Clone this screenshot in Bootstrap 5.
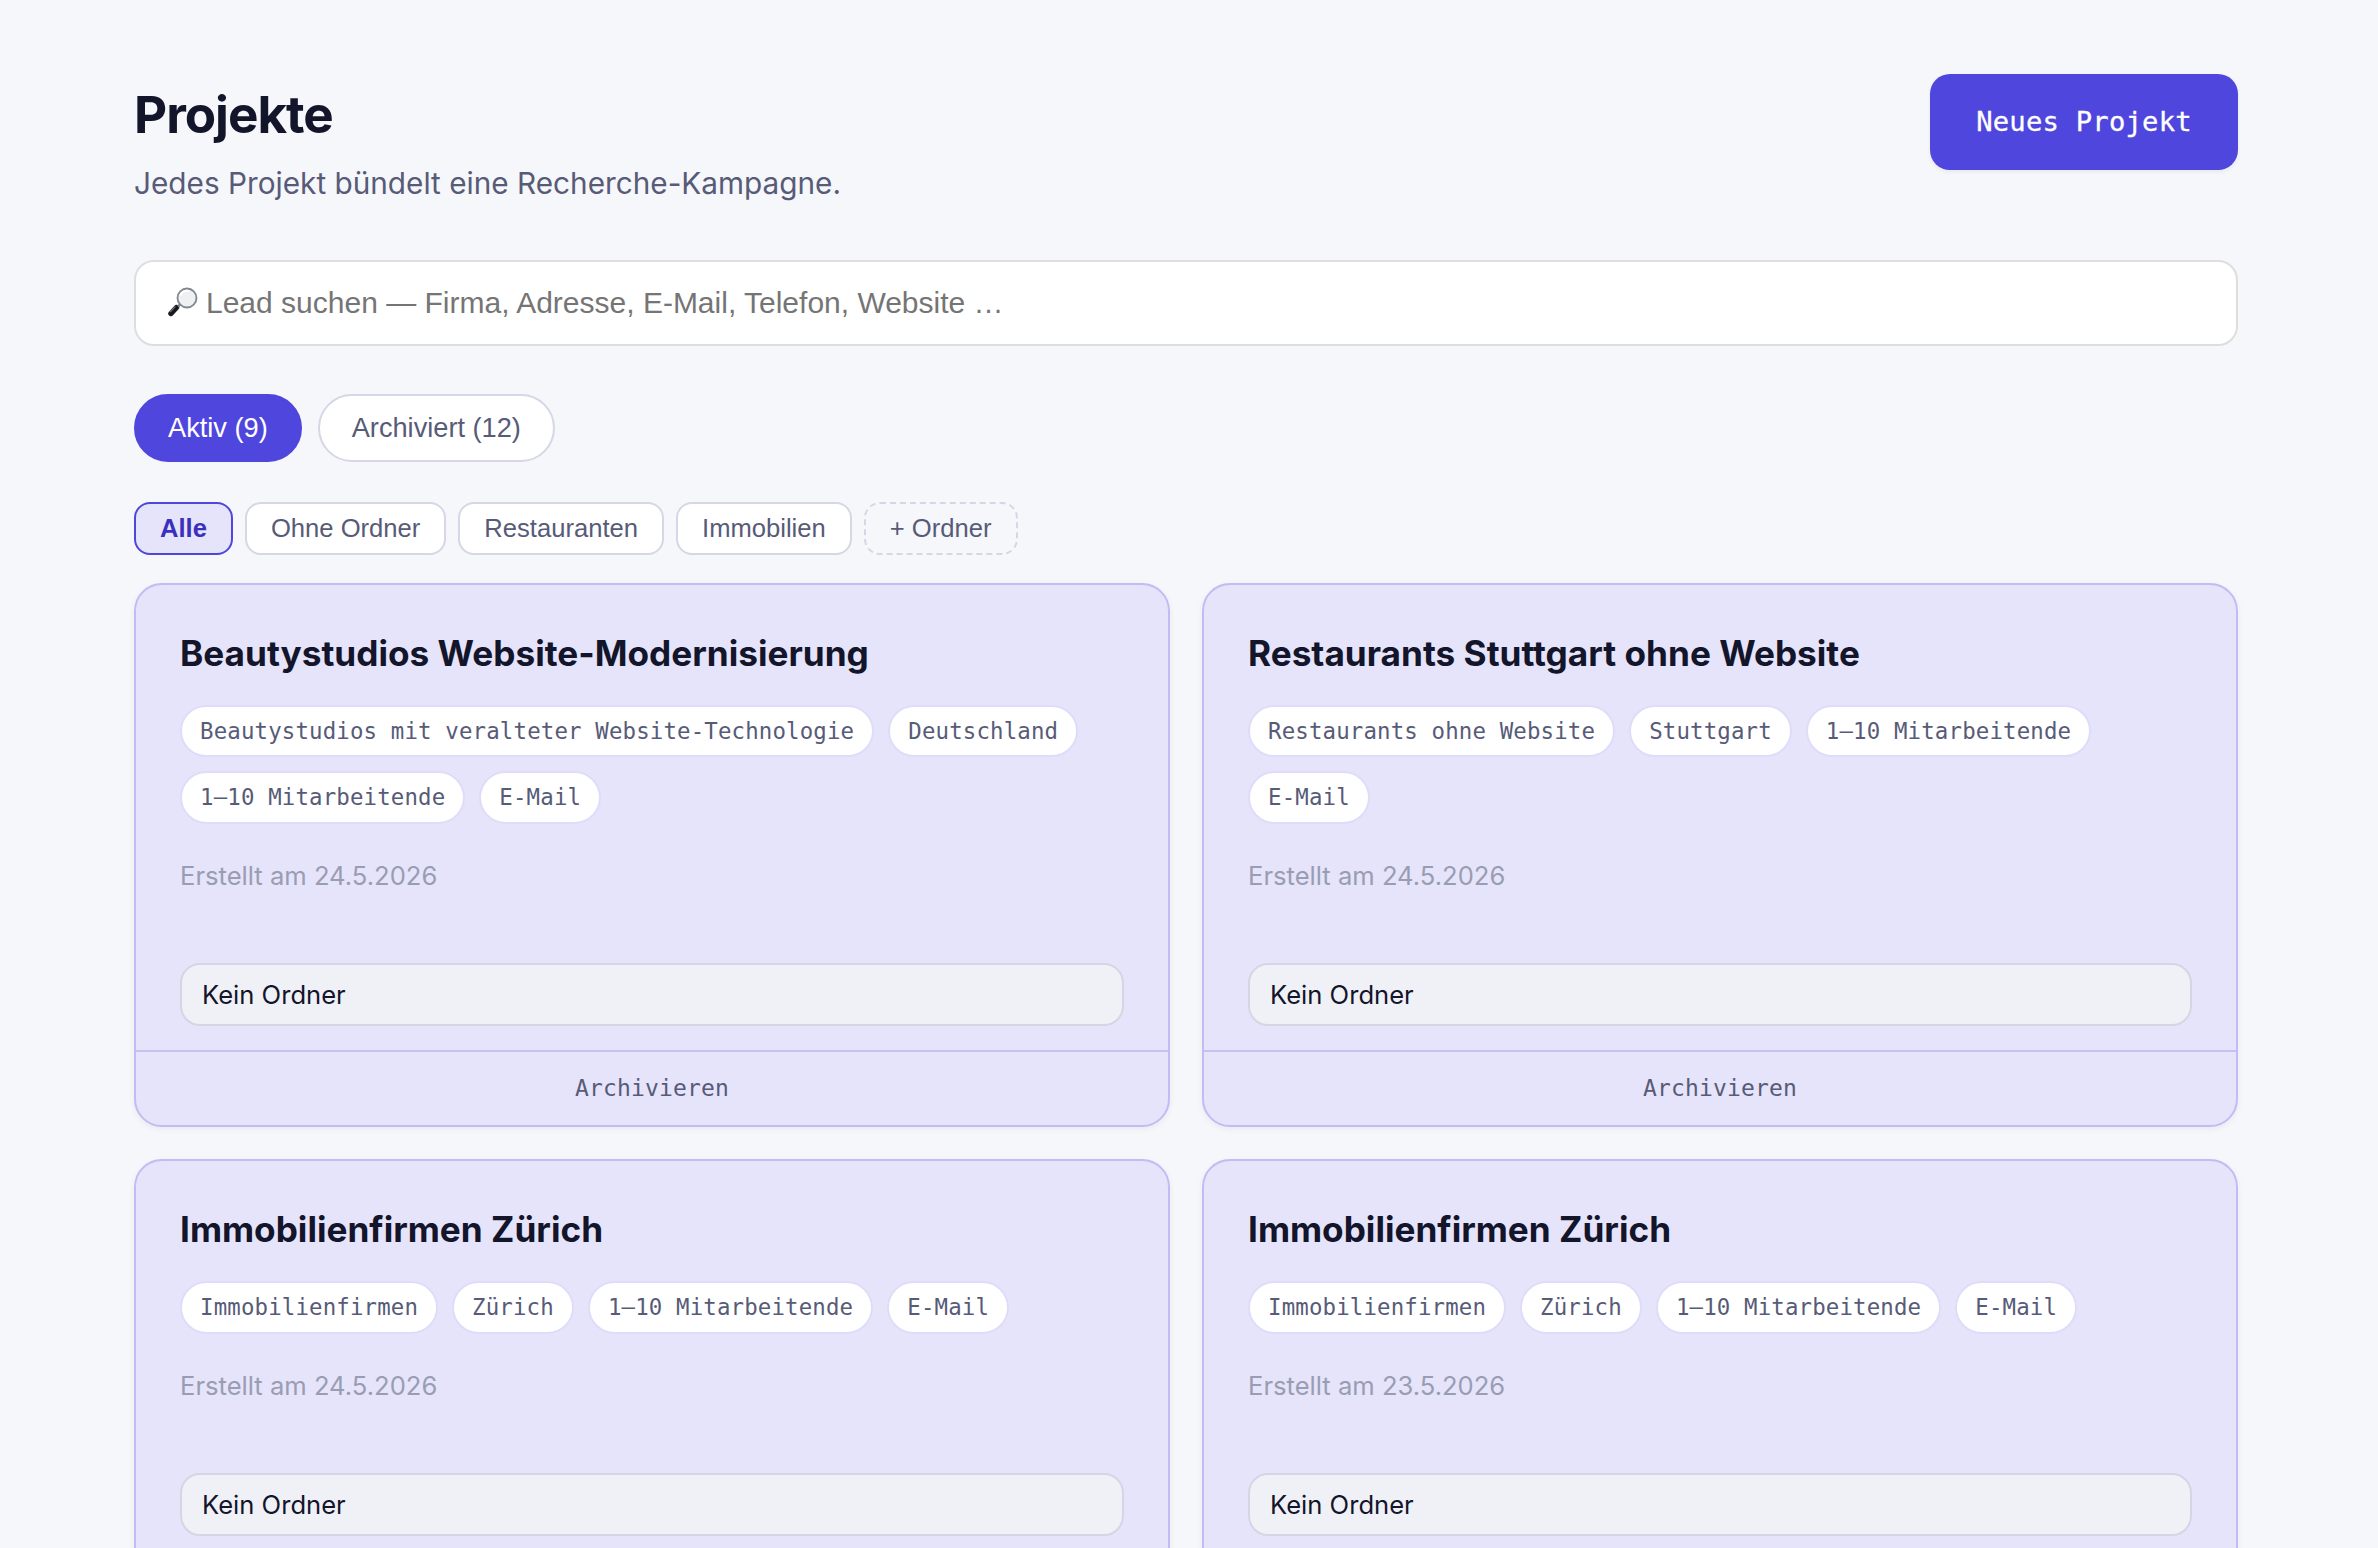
<!DOCTYPE html>
<html lang="de">

<head>
    <meta charset="UTF-8">
    <title>Projekte</title>
    <!-- Bootstrap CSS -->
    <link href="https://cdn.jsdelivr.net/npm/bootstrap@5.3.0/dist/css/bootstrap.min.css" rel="stylesheet">
    <style>
        :root {
            --ink: #13152b;
            --muted-ink: #575b78;
            --primary: #4f46dd;
            --line: #d6d6e6;
            --mono: "DejaVu Sans Mono", monospace;
            --arial: "Liberation Sans", Arial, sans-serif;
        }

        body {
            background: #f6f7fb;
            color: var(--ink);
            font-family: Inter, sans-serif;
            overflow: hidden;
        }

        .page {
            height: 1548px;
            overflow: hidden;
            padding: 74px 140px 0 134px;
        }

        .page-title {
            font-size: 51.2px;
            line-height: 60px;
            font-weight: 700;
            letter-spacing: -1.02px;
            margin: 10px 0 0;
        }

        .page-sub {
            font-size: 29.75px;
            line-height: 48px;
            color: var(--muted-ink);
            margin: 15px 0 0;
        }

        .btn-new {
            width: 308px;
            height: 96px;
            border-radius: 20px;
            background: var(--primary);
            color: #fff;
            font-family: var(--mono);
            font-size: 27.2px;
            letter-spacing: .22px;
            -webkit-text-stroke: .3px #fff;
            box-shadow: 0 2px 4px rgba(19, 21, 43, .06);
        }

        .search-box {
            height: 86px;
            margin-top: 53px;
            padding: 0 30px;
            background: #fff;
            border: 2px solid #dedede;
            border-radius: 20px;
        }

        .search-box input {
            margin-bottom: 2px;
            font-family: var(--arial);
            font-size: 30px;
            color: #757575;
        }

        .search-box input::placeholder {
            color: #757575;
            opacity: 1;
        }

        .status-tabs {
            margin-top: 48px;
            gap: 16px;
        }

        .status-tab {
            height: 68px;
            padding: 0 32px;
            border: 2px solid var(--line);
            background: #fff;
            color: var(--muted-ink);
            font-family: var(--arial);
            font-size: 27.2px;
            line-height: 64px;
        }

        .status-tab.active {
            background: var(--primary);
            border-color: var(--primary);
            color: #fff;
        }

        .folders {
            margin-top: 40px;
            gap: 12px;
        }

        .folder {
            height: 53px;
            padding: 0 24px;
            border: 2px solid var(--line);
            border-radius: 16px;
            background: #fff;
            color: var(--muted-ink);
            font-family: var(--arial);
            font-size: 25.6px;
            line-height: 49px;
        }

        .folder.active {
            background: #e6e4fa;
            border-color: var(--primary);
            color: #3a30bd;
            font-weight: 700;
        }

        .folder.add {
            padding: 0 24.5px 0 24px;
            background: transparent;
            border-style: dashed;
        }

        .projects {
            --bs-gutter-x: 32px;
            --bs-gutter-y: 32px;
            margin-top: -4px;
        }

        .project {
            background: #e6e4fa;
            border: 2px solid #c1bcf3;
            border-radius: 28px;
            box-shadow: 0 2px 6px rgba(19, 21, 43, .06);
        }

        .project .card-body {
            padding: 44.5px 44px 24px;
        }

        .project-name {
            font-size: 35.2px;
            line-height: 46px;
            font-weight: 700;
            margin: 0 0 29.5px;
        }

        .tags {
            gap: 14px;
        }

        .tag {
            height: 52.4px;
            padding: 0 18px;
            border: 2px solid #dfdcfa;
            background: #fff;
            color: var(--muted-ink);
            font-family: var(--mono);
            font-size: 22.4px;
            line-height: 48.4px;
            letter-spacing: .15px;
        }

        .created {
            font-size: 25.6px;
            line-height: 40px;
            color: #999db3;
            margin: 32px 0 67.4px;
        }

        .project .form-select {
            height: 63px;
            padding: 0 20px;
            background: #f0f1f6;
            border: 2px solid #d6d5e4;
            border-radius: 20px;
            color: var(--ink);
            font-size: 25.6px;
            line-height: 59px;
        }

        .project .card-footer {
            height: 75px;
            padding: 0;
            background: transparent;
            border-top: 2px solid #c6c1f0;
        }

        .btn-archive {
            height: 73px;
            padding: 0;
            color: var(--muted-ink);
            font-family: var(--mono);
            font-size: 23px;
            letter-spacing: .15px;
        }
    </style>
</head>

<body>
    <div class="page">
        <!-- Kopfbereich -->
        <header class="d-flex justify-content-between align-items-start">
            <div>
                <h1 class="page-title">Projekte</h1>
                <p class="page-sub">Jedes Projekt bündelt eine Recherche-Kampagne.</p>
            </div>
            <button type="button" class="btn btn-new border-0">Neues Projekt</button>
        </header>

        <!-- Suche -->
        <div class="search-box d-flex align-items-center">
            <svg width="32" height="32" viewBox="0 0 32 32" aria-hidden="true">
                <path d="M5 26.500 10.500 20.500" stroke="#17191e" stroke-width="5.400" stroke-linecap="round" />
                <path d="M4.500 24.500 9 19.800" stroke="#6d747b" stroke-width="1.200" stroke-linecap="round" />
                <path d="M12 19.500 15 16.500" stroke="#7d838b" stroke-width="2.500" />
                <circle cx="21" cy="11" r="9.500" fill="#eff0f2" stroke="#7f8791" stroke-width="1.800" />
                <path d="M14.500 8a7.300 7.300 0 0 1 8-4" fill="none" stroke="#fff" stroke-width="2" stroke-linecap="round" />
            </svg>
            <input type="text" class="flex-grow-1 border-0 bg-transparent p-0 ms-2" placeholder="Lead suchen — Firma, Adresse, E-Mail, Telefon, Website …">
        </div>

        <!-- Status -->
        <div class="status-tabs d-flex">
            <button type="button" class="status-tab rounded-pill active">Aktiv (9)</button>
            <button type="button" class="status-tab rounded-pill">Archiviert (12)</button>
        </div>

        <!-- Ordner -->
        <div class="folders d-flex">
            <button type="button" class="folder active">Alle</button>
            <button type="button" class="folder">Ohne Ordner</button>
            <button type="button" class="folder">Restauranten</button>
            <button type="button" class="folder">Immobilien</button>
            <button type="button" class="folder add">+ Ordner</button>
        </div>

        <!-- Projektliste -->
        <div class="projects row row-cols-2">
            <div class="col">
                <div class="card project">
                    <div class="card-body">
                        <h2 class="project-name">Beautystudios Website-Modernisierung</h2>
                        <div class="tags d-flex flex-wrap">
                            <span class="tag rounded-pill">Beautystudios mit veralteter Website-Technologie</span>
                            <span class="tag rounded-pill">Deutschland</span>
                            <span class="tag rounded-pill">1–10 Mitarbeitende</span>
                            <span class="tag rounded-pill">E-Mail</span>
                        </div>
                        <p class="created">Erstellt am 24.5.2026</p>
                        <select class="form-select" aria-label="Ordner">
                            <option>Kein Ordner</option>
                        </select>
                    </div>
                    <div class="card-footer">
                        <button type="button" class="btn btn-archive w-100 border-0">Archivieren</button>
                    </div>
                </div>
            </div>
            <div class="col">
                <div class="card project">
                    <div class="card-body">
                        <h2 class="project-name">Restaurants Stuttgart ohne Website</h2>
                        <div class="tags d-flex flex-wrap">
                            <span class="tag rounded-pill">Restaurants ohne Website</span>
                            <span class="tag rounded-pill">Stuttgart</span>
                            <span class="tag rounded-pill">1–10 Mitarbeitende</span>
                            <span class="tag rounded-pill">E-Mail</span>
                        </div>
                        <p class="created">Erstellt am 24.5.2026</p>
                        <select class="form-select" aria-label="Ordner">
                            <option>Kein Ordner</option>
                        </select>
                    </div>
                    <div class="card-footer">
                        <button type="button" class="btn btn-archive w-100 border-0">Archivieren</button>
                    </div>
                </div>
            </div>
            <div class="col">
                <div class="card project">
                    <div class="card-body">
                        <h2 class="project-name">Immobilienfirmen Zürich</h2>
                        <div class="tags d-flex flex-wrap">
                            <span class="tag rounded-pill">Immobilienfirmen</span>
                            <span class="tag rounded-pill">Zürich</span>
                            <span class="tag rounded-pill">1–10 Mitarbeitende</span>
                            <span class="tag rounded-pill">E-Mail</span>
                        </div>
                        <p class="created">Erstellt am 24.5.2026</p>
                        <select class="form-select" aria-label="Ordner">
                            <option>Kein Ordner</option>
                        </select>
                    </div>
                    <div class="card-footer"></div>
                </div>
            </div>
            <div class="col">
                <div class="card project">
                    <div class="card-body">
                        <h2 class="project-name">Immobilienfirmen Zürich</h2>
                        <div class="tags d-flex flex-wrap">
                            <span class="tag rounded-pill">Immobilienfirmen</span>
                            <span class="tag rounded-pill">Zürich</span>
                            <span class="tag rounded-pill">1–10 Mitarbeitende</span>
                            <span class="tag rounded-pill">E-Mail</span>
                        </div>
                        <p class="created">Erstellt am 23.5.2026</p>
                        <select class="form-select" aria-label="Ordner">
                            <option>Kein Ordner</option>
                        </select>
                    </div>
                    <div class="card-footer"></div>
                </div>
            </div>
        </div>
    </div>

    <!-- Bootstrap JS -->
    <script src="https://cdn.jsdelivr.net/npm/bootstrap@5.3.0/dist/js/bootstrap.bundle.min.js"></script>
</body>

</html>
